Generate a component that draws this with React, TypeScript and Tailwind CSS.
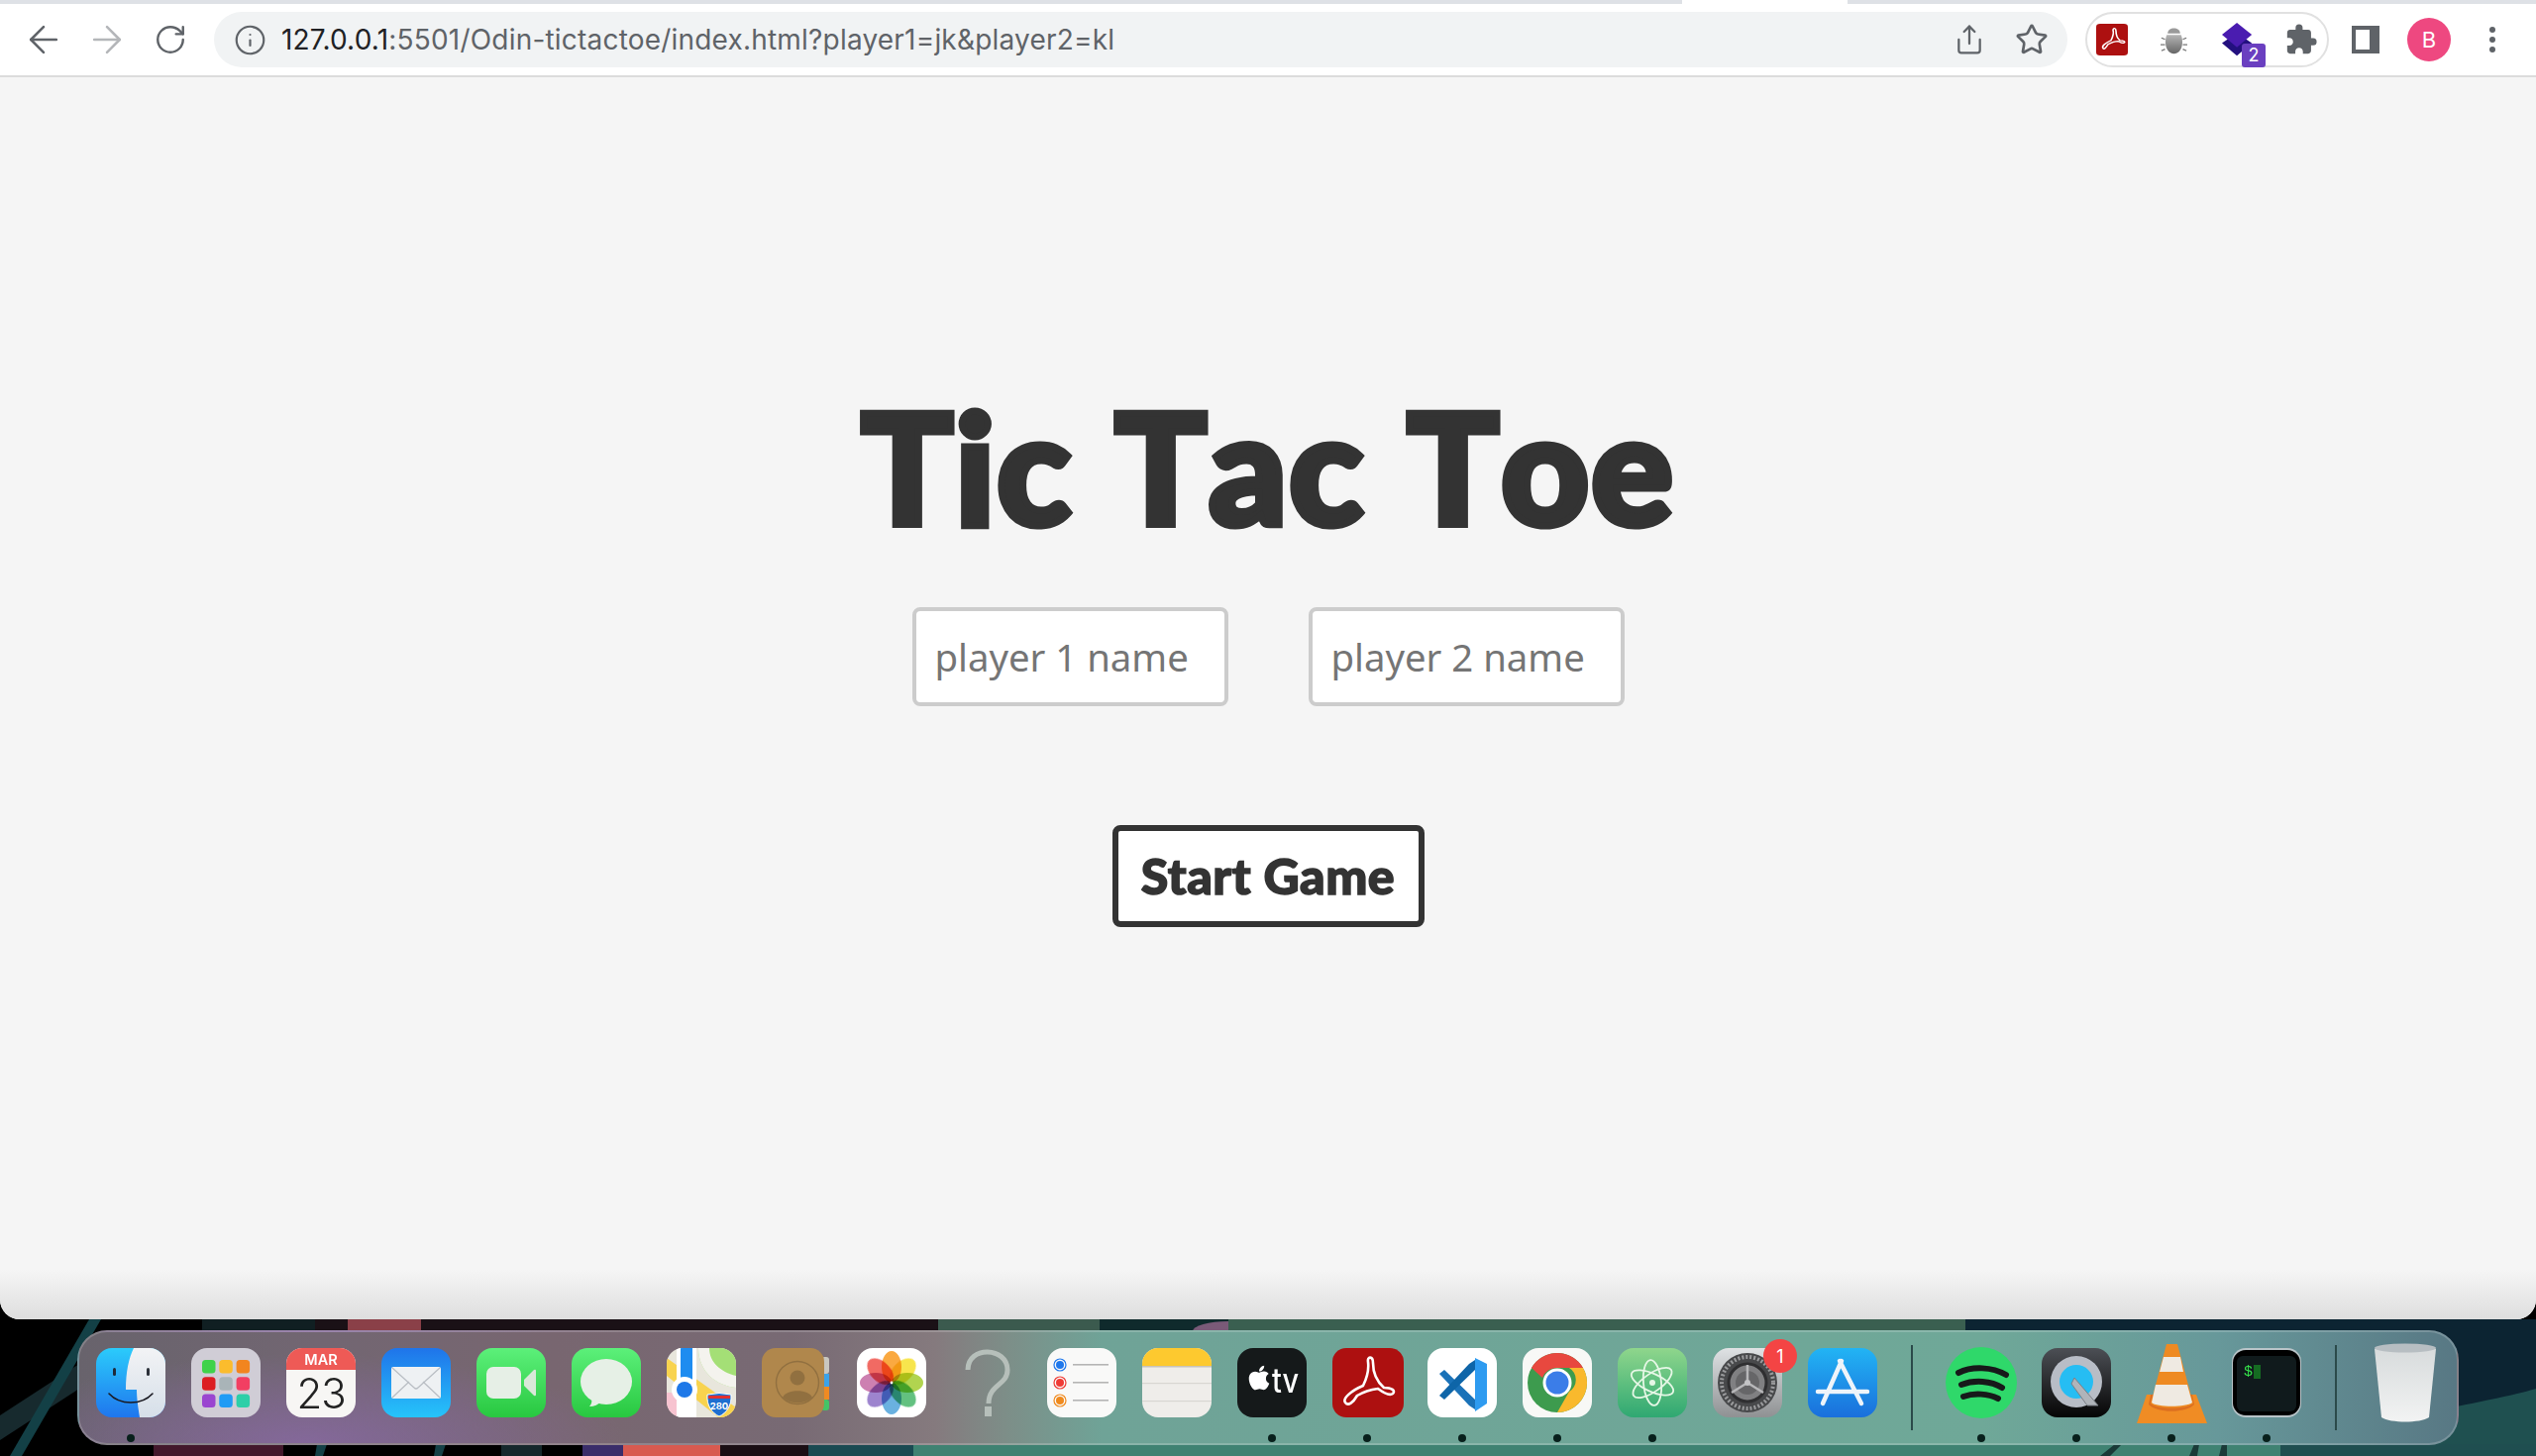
import type { ReactNode } from "react";
import { ArrowLeft, ArrowRight, Info, RotateCw, Share, Star } from "lucide-react";
import { MdExtension } from "react-icons/md";
import { FaApple } from "react-icons/fa";

const titleFont = "font-['Lato',sans-serif] font-black";

function Icon({ children, defs }: { children: ReactNode; defs?: ReactNode }) {
  return (
    <svg viewBox="0 0 70 70" className="h-[70px] w-[70px] overflow-visible">
      {defs && <defs>{defs}</defs>}
      {children}
    </svg>
  );
}

function Finder() {
  return (
    <Icon
      defs={
        <>
          <linearGradient id="fb" x1="0" y1="0" x2="0" y2="1">
            <stop offset="0" stopColor="#2bcbfb" />
            <stop offset="1" stopColor="#1f76ee" />
          </linearGradient>
          <linearGradient id="fw" x1="0" y1="0" x2="0" y2="1">
            <stop offset="0" stopColor="#f2f3f5" />
            <stop offset="1" stopColor="#d6dfe9" />
          </linearGradient>
          <clipPath id="fc">
            <rect width="70" height="70" rx="16" />
          </clipPath>
        </>
      }
    >
      <g clipPath="url(#fc)">
        <rect width="70" height="70" fill="url(#fb)" />
        <path d="M38 0H70V70H44C42 58 41 50 41 42H30C30 24 33 10 38 0Z" fill="url(#fw)" />
      </g>
      <rect x="17" y="20" width="3" height="8" rx="1.5" fill="#1e2a3a" />
      <rect x="51" y="20" width="3" height="8" rx="1.5" fill="#2a2f38" />
      <path d="M13 46C24 58 46 58 57 46" fill="none" stroke="#1a1a22" strokeWidth="1.6" strokeLinecap="round" />
    </Icon>
  );
}

function Launchpad() {
  const tiles = ["#3fd24a", "#fbbc2d", "#f2851f", "#dc1d22", "#a9b4b8", "#f23f62", "#9a45d0", "#1f9bf5", "#2dcfa8"];
  return (
    <Icon>
      <rect width="70" height="70" rx="16" fill="#d0cdd6" />
      {tiles.map((color, i) => (
        <rect key={color} x={11 + (i % 3) * 17.3} y={12 + Math.floor(i / 3) * 17.3} width="13.5" height="13.5" rx="3.5" fill={color} />
      ))}
    </Icon>
  );
}

function Calendar() {
  return (
    <Icon defs={<clipPath id="cc"><rect width="70" height="70" rx="16" /></clipPath>}>
      <g clipPath="url(#cc)">
        <rect width="70" height="70" fill="#f7f6f4" />
        <rect width="70" height="22" fill="#ee5a56" />
      </g>
      <text x="35" y="17" textAnchor="middle" fontFamily="Inter, sans-serif" fontWeight="600" fontSize="14.5" fill="#fff">MAR</text>
      <text x="35" y="61" textAnchor="middle" fontFamily="Inter, sans-serif" fontWeight="300" fontSize="42" letterSpacing="-1" fill="#222">23</text>
    </Icon>
  );
}

function Mail() {
  return (
    <Icon
      defs={
        <linearGradient id="mb" x1="0" y1="0" x2="0" y2="1">
          <stop offset="0" stopColor="#1f74ea" />
          <stop offset="1" stopColor="#26c4fa" />
        </linearGradient>
      }
    >
      <rect width="70" height="70" rx="16" fill="url(#mb)" />
      <rect x="10" y="19" width="50" height="32" rx="2" fill="#eef1f3" />
      <path d="M11 20L33 40Q35 42 37 40L59 20M11 50L28 34M59 50L42 34" fill="none" stroke="#b9bec4" strokeWidth="1.2" />
    </Icon>
  );
}

function FaceTime() {
  return (
    <Icon
      defs={
        <linearGradient id="ftb" x1="0" y1="0" x2="0" y2="1">
          <stop offset="0" stopColor="#5cf07a" />
          <stop offset="1" stopColor="#28c840" />
        </linearGradient>
      }
    >
      <rect width="70" height="70" rx="16" fill="url(#ftb)" />
      <rect x="10" y="19" width="35" height="32" rx="7" fill="#e6efe6" />
      <path d="M48 32L58 22Q60 21 60 23V47Q60 49 58 48L48 38Z" fill="#d8e8d8" />
    </Icon>
  );
}

function Messages() {
  return (
    <Icon
      defs={
        <linearGradient id="msb" x1="0" y1="0" x2="0" y2="1">
          <stop offset="0" stopColor="#5cf07a" />
          <stop offset="1" stopColor="#28c840" />
        </linearGradient>
      }
    >
      <rect width="70" height="70" rx="16" fill="url(#msb)" />
      <ellipse cx="35" cy="34" rx="26" ry="23" fill="#e6f0e6" />
      <path d="M20 50C21 54 20 57 18 59C23 59 27 57 30 54Z" fill="#e6f0e6" />
    </Icon>
  );
}

function Maps() {
  return (
    <Icon defs={<clipPath id="mc"><rect width="70" height="70" rx="16" /></clipPath>}>
      <g clipPath="url(#mc)">
        <rect width="70" height="70" fill="#e8e6dc" />
        <path d="M32 0H70V40C50 38 32 24 32 0Z" fill="#a4df76" />
        <path d="M32 0H43C43 14 54 24 70 28V40C50 38 32 24 32 0Z" fill="#f4f3ee" />
        <path d="M0 10L70 60V70H52L0 28Z" fill="#f8d34e" />
        <rect y="45" width="10" height="25" fill="#f7c3d0" />
        <rect x="10" width="20" height="70" fill="#fff" />
        <rect x="14" width="12" height="32" fill="#1e8cf0" />
        <circle cx="18" cy="42" r="13" fill="#fff" />
        <circle cx="18" cy="42" r="8" fill="#1e78e8" />
        <path d="M41 47Q53 44 65 47C66 58 60 66 53 69C46 66 40 58 41 47Z" fill="#1e6fd0" stroke="#fff" strokeWidth="1" />
        <rect x="42" y="48" width="22" height="3" fill="#e03030" />
        <text x="53" y="62" textAnchor="middle" fontFamily="Inter, sans-serif" fontWeight="700" fontSize="9.5" fill="#fff">280</text>
      </g>
    </Icon>
  );
}

function Contacts() {
  return (
    <Icon>
      <rect x="60" y="9" width="8" height="17" rx="3" fill="#c9c7c0" />
      <rect x="60" y="26" width="8" height="13" fill="#3ba3ea" />
      <rect x="60" y="39" width="8" height="13" fill="#ef8a22" />
      <rect x="60" y="52" width="8" height="11" rx="3" fill="#44c466" />
      <rect x="0" width="63" height="70" rx="14" fill="#b0874c" />
      <circle cx="36" cy="35" r="21.5" fill="none" stroke="#917040" strokeWidth="1.4" />
      <circle cx="36" cy="30" r="7.5" fill="#917040" />
      <path d="M21 50C24 41 48 41 51 50C43 57 29 57 21 50Z" fill="#917040" />
    </Icon>
  );
}

function Photos() {
  const petals = ["#f9a02c", "#f6e23a", "#a9cf3c", "#52ba72", "#5aa9dd", "#9277c9", "#c872a8", "#ef5a52"];
  return (
    <Icon>
      <rect width="70" height="70" rx="16" fill="#fff" />
      {petals.map((color, i) => (
        <ellipse key={color} cx="35" cy="19" rx="10" ry="16" fill={color} fillOpacity="0.9" className="mix-blend-multiply" transform={`rotate(${i * 45} 35 35)`} />
      ))}
      <circle cx="35" cy="35" r="1.4" fill="#fff" />
    </Icon>
  );
}

function Unknown() {
  return (
    <Icon>
      <path d="M16 22C16 -3 56 -1 56 22C56 38 37 36 37 56" fill="none" stroke="#b6bfba" strokeWidth="5" />
      <rect x="33" y="59" width="7" height="10" fill="#b6bfba" />
    </Icon>
  );
}

function Reminders() {
  const dots = ["#1f78ec", "#ef3b35", "#f08a1d"];
  return (
    <Icon>
      <rect width="70" height="70" rx="16" fill="#f9f9f8" />
      {dots.map((color, i) => (
        <g key={color}>
          <circle cx="13" cy={17 + i * 18} r="6" fill="none" stroke={color} strokeWidth="1.2" />
          <circle cx="13" cy={17 + i * 18} r="4" fill={color} />
          <rect x="26" y={16 + i * 18} width="36" height="1.6" fill="#b5b5b5" />
        </g>
      ))}
    </Icon>
  );
}

function Notes() {
  return (
    <Icon defs={<clipPath id="nc"><rect width="70" height="70" rx="16" /></clipPath>}>
      <g clipPath="url(#nc)">
        <rect width="70" height="70" fill="#efedea" />
        <rect width="70" height="18" fill="#fdc92f" />
        <rect y="18" width="70" height="1.5" fill="#c8c4b8" />
        <rect y="35" width="70" height="1.2" fill="#d8d6d2" />
        <rect y="53" width="70" height="1.2" fill="#d8d6d2" />
      </g>
    </Icon>
  );
}

function AppleTv() {
  return (
    <Icon>
      <rect width="70" height="70" rx="16" fill="#15191a" />
      <FaApple x="8" y="16" size="28" color="#fff" />
      <text x="35" y="45" textLength="27" lengthAdjust="spacingAndGlyphs" fontFamily="Inter, sans-serif" fontWeight="500" fontSize="34" fill="#fff">tv</text>
    </Icon>
  );
}

const acrobatPath =
  "M13 55C10 51 19 43 31 38C36 28 37 22 36 14C35 8 41 8 41 15C41 24 44 33 52 40C60 40 64 43 61 46C57 49 50 44 46 41C38 42 30 45 25 48C21 55 16 59 13 55Z";

function Acrobat() {
  return (
    <Icon>
      <rect width="72" height="70" rx="14" fill="#ad1010" />
      <path d={acrobatPath} fill="none" stroke="#fff" strokeWidth="2.6" />
    </Icon>
  );
}

function VsCode() {
  return (
    <Icon>
      <rect width="70" height="70" rx="16" fill="#fff" />
      <path d="M12 26L17 22L48 52L48 62L42 58Z" fill="#1a72b8" />
      <path d="M12 48L17 52L48 22V12L42 16Z" fill="#0e65a8" />
      <path d="M48 10L60 16V56L48 64Z" fill="#2e9bf0" />
    </Icon>
  );
}

function Chrome() {
  return (
    <Icon>
      <rect width="70" height="70" rx="16" fill="#f8f8f6" />
      <circle cx="35" cy="35" r="30" fill="#3d9b4e" />
      <path d="M35 5A30 30 0 0 1 61 20H35A15 15 0 0 0 20 30L9 20A30 30 0 0 1 35 5Z" fill="#e8483f" />
      <path d="M61 20A30 30 0 0 1 35 65L47 44A14 14 0 0 0 47 20Z" fill="#f9b92d" />
      <circle cx="35" cy="35" r="14.5" fill="#fff" />
      <circle cx="35" cy="35" r="11.5" fill="#3b7de8" />
    </Icon>
  );
}

function Atom() {
  return (
    <Icon
      defs={
        <linearGradient id="ab" x1="0" y1="0" x2="0" y2="1">
          <stop offset="0" stopColor="#8fd68c" />
          <stop offset="1" stopColor="#2fa872" />
        </linearGradient>
      }
    >
      <rect width="70" height="70" rx="16" fill="url(#ab)" />
      <g fill="none" stroke="#e6f7e6" strokeWidth="1.8">
        <ellipse cx="35" cy="35" rx="23" ry="9" transform="rotate(25 35 35)" />
        <ellipse cx="35" cy="35" rx="23" ry="9" transform="rotate(-35 35 35)" />
        <ellipse cx="35" cy="35" rx="23" ry="9" transform="rotate(85 35 35)" />
      </g>
      <circle cx="35" cy="35" r="3" fill="#e6f7e6" />
    </Icon>
  );
}

function SystemPrefs() {
  return (
    <Icon
      defs={
        <linearGradient id="sb" x1="0" y1="0" x2="0" y2="1">
          <stop offset="0" stopColor="#dfe2e4" />
          <stop offset="1" stopColor="#8f9193" />
        </linearGradient>
      }
    >
      <rect width="70" height="70" rx="16" fill="url(#sb)" />
      <circle cx="35" cy="35" r="30" fill="#48494b" />
      <circle cx="35" cy="35" r="26" fill="none" stroke="#9a9b9d" strokeWidth="4" strokeDasharray="2 2" />
      <circle cx="35" cy="35" r="19" fill="#808082" stroke="#2f2f31" strokeWidth="3" />
      <circle cx="35" cy="35" r="12" fill="#666668" />
      <path d="M35 35V17M35 35L19 45M35 35L51 45" stroke="#b8b8ba" strokeWidth="2.5" />
      <circle cx="35" cy="35" r="3" fill="#c4c4c6" />
    </Icon>
  );
}

function AppStore() {
  return (
    <Icon
      defs={
        <linearGradient id="asb" x1="0" y1="0" x2="0" y2="1">
          <stop offset="0" stopColor="#22b4f4" />
          <stop offset="1" stopColor="#1a6fdc" />
        </linearGradient>
      }
    >
      <rect width="70" height="70" rx="16" fill="url(#asb)" />
      <path d="M34 13L15 56M32 13L54 56M10 44H60" stroke="#eef4fa" strokeWidth="4.5" strokeLinecap="round" fill="none" />
    </Icon>
  );
}

function Spotify() {
  return (
    <Icon>
      <circle cx="35" cy="35" r="36" fill="#2fd86a" />
      <path d="M12 25C26 18 46 19 60 27M15 37C28 32 45 33 56 40M17 49C28 45 42 46 52 51" fill="none" stroke="#17191a" strokeWidth="6" strokeLinecap="round" />
    </Icon>
  );
}

function QuickTime() {
  return (
    <Icon
      defs={
        <linearGradient id="qb" x1="0" y1="0" x2="0" y2="1">
          <stop offset="0" stopColor="#4c4f55" />
          <stop offset="1" stopColor="#050505" />
        </linearGradient>
      }
    >
      <rect width="70" height="70" rx="16" fill="url(#qb)" />
      <circle cx="35" cy="34" r="26" fill="#b8bdc6" />
      <circle cx="35" cy="34" r="17" fill="#26bdf3" />
      <path d="M33 30L57 58H46L30 36Z" fill="#b0b4ba" stroke="#7b7f85" strokeWidth="1" />
    </Icon>
  );
}

function Vlc() {
  return (
    <Icon>
      <path d="M0 76L10 47H60L71 76Z" fill="#f08c24" />
      <path d="M14 47H56L58 57C50 66 20 66 12 57Z" fill="#dc6f20" />
      <path d="M30 -4H41L57 56C50 62 20 62 14 56Z" fill="#ee8a22" />
      <path d="M27 9H44L47 24H23Z" fill="#efeae2" />
      <path d="M19 37H51L56 55C50 60 20 60 15 55Z" fill="#efeae2" />
    </Icon>
  );
}

function Terminal() {
  return (
    <Icon>
      <rect width="70" height="70" rx="14" fill="#b9c4c8" />
      <rect x="1" y="2" width="68" height="66" rx="13" fill="#000" />
      <rect x="5" y="8" width="60" height="56" rx="6" fill="#101a1c" />
      <text x="12" y="28" fontFamily="'Liberation Mono', monospace" fontSize="15" fill="#35e04a">$</text>
      <rect x="22" y="17" width="7" height="14" fill="#156b22" />
    </Icon>
  );
}

function Trash() {
  return (
    <Icon
      defs={
        <linearGradient id="tb" x1="0" y1="0" x2="0" y2="1">
          <stop offset="0" stopColor="#d6dadb" />
          <stop offset="1" stopColor="#f2f3f3" />
        </linearGradient>
      }
    >
      <path d="M4 1C16 -5 54 -5 66 1L59 70C50 76 20 76 11 70Z" fill="url(#tb)" />
      <ellipse cx="35" cy="0" rx="31" ry="4.5" fill="#b7bec2" />
    </Icon>
  );
}

type DockEntry = { id: string; node: ReactNode; running?: boolean; badge?: string };

const dockApps: DockEntry[] = [
  { id: "finder", node: <Finder />, running: true },
  { id: "launchpad", node: <Launchpad /> },
  { id: "calendar", node: <Calendar /> },
  { id: "mail", node: <Mail /> },
  { id: "facetime", node: <FaceTime /> },
  { id: "messages", node: <Messages /> },
  { id: "maps", node: <Maps /> },
  { id: "contacts", node: <Contacts /> },
  { id: "photos", node: <Photos /> },
  { id: "unknown", node: <Unknown /> },
  { id: "reminders", node: <Reminders /> },
  { id: "notes", node: <Notes /> },
  { id: "tv", node: <AppleTv />, running: true },
  { id: "acrobat", node: <Acrobat />, running: true },
  { id: "vscode", node: <VsCode />, running: true },
  { id: "chrome", node: <Chrome />, running: true },
  { id: "atom", node: <Atom />, running: true },
  { id: "prefs", node: <SystemPrefs />, badge: "1" },
  { id: "appstore", node: <AppStore /> },
];

const dockRecent: DockEntry[] = [
  { id: "spotify", node: <Spotify />, running: true },
  { id: "quicktime", node: <QuickTime />, running: true },
  { id: "vlc", node: <Vlc />, running: true },
  { id: "terminal", node: <Terminal />, running: true },
];

function DockItem({ node, running, badge }: Omit<DockEntry, "id">) {
  return (
    <div className="relative flex w-[70px] flex-col items-center">
      {node}
      {badge && (
        <span className="absolute -right-[15px] -top-[9px] flex h-[34px] w-[34px] items-center justify-center rounded-full bg-[#f44444] font-['Inter',sans-serif] text-[18px] text-white">
          {badge}
        </span>
      )}
      <span className={`mt-[17px] h-[8px] w-[8px] rounded-full ${running ? "bg-[#08201c]" : "bg-transparent"}`} />
    </div>
  );
}

function DockSeparator() {
  return (
    <div className="-mt-[3px] flex h-[86px] w-[18px] justify-center self-start">
      <div className="h-full w-[2px] bg-[#2b4a4a]" />
    </div>
  );
}

function Dock() {
  return (
    <div className="relative z-10 ml-[78px] mt-[11px] flex h-[116px] w-[2404px] gap-[26px] rounded-[30px] border-[2px] border-[#ffffff30] bg-[radial-gradient(ellipse_320px_90px_at_230px_100%,#84689a,transparent),linear-gradient(90deg,#68636c_0%,#726672_10%,#786670_20%,#786a74_30%,#857a7e_36%,#7d8e88_39%,#6fa397_43%,#6fa898_80%,#67989a_90%,#587884_100%)] pl-[17px] pt-[16px]">
      {dockApps.map((app) => (
        <DockItem key={app.id} node={app.node} running={app.running} badge={app.badge} />
      ))}
      <DockSeparator />
      {dockRecent.map((app) => (
        <DockItem key={app.id} node={app.node} running={app.running} />
      ))}
      <DockSeparator />
      <DockItem node={<Trash />} />
    </div>
  );
}

function Wallpaper() {
  return (
    <svg viewBox="0 0 2560 138" className="absolute bottom-0 left-0 h-[138px] w-[2560px]">
      <rect width="2560" height="138" fill="#000" />
      {/* upper edge, between the window and the dock */}
      <rect x="204" width="114" height="20" fill="#101f22" />
      <rect x="318" width="630" height="20" fill="#1a1116" />
      <rect x="351" width="74" height="14" fill="#8a4048" />
      <rect x="947" width="163" height="14" fill="#3b5a4e" />
      <rect x="1110" width="130" height="14" fill="#0f2a2c" />
      <ellipse cx="1240" cy="12" rx="36" ry="10" fill="#7a5a78" />
      <rect x="1240" width="744" height="14" fill="#3a5f50" />
      <path d="M1984 0H2560V92C2520 84 2500 86 2440 100L1984 120Z" fill="#0c2432" />
      <path d="M2480 88C2510 82 2540 76 2560 70V138H2300L2440 100Z" fill="#1f5050" />
      {/* lower edge, under the dock */}
      <rect x="155" y="126" width="131" height="12" fill="#43182c" />
      <rect x="506" y="126" width="41" height="12" fill="#16282c" />
      <rect x="588" y="126" width="41" height="12" fill="#3a2d6a" />
      <rect x="629" y="126" width="98" height="12" fill="#d85a50" />
      <rect x="727" y="126" width="89" height="12" fill="#1a0e14" />
      <rect x="816" y="126" width="106" height="12" fill="#1a4a52" />
      <rect x="922" y="126" width="1380" height="12" fill="#3f8272" />
      <rect x="2302" y="126" width="258" height="12" fill="#1f4e50" />
      <path d="M2120 138L2135 126H2142L2130 138ZM2210 138L2215 126H2220L2218 138ZM2240 138L2243 126H2248V138Z" fill="#1a3a38" />
      <path d="M320 126H330L326 138H318ZM440 126H450L446 138H438Z" fill="#134046" />
      {/* left edge, beside the dock */}
      <path d="M0 97L80 45V70L0 122Z" fill="#172a2e" />
      <path d="M90 0H102L22 138H10Z" fill="#134046" />
    </svg>
  );
}

function ToolbarIcons() {
  return (
    <div className="flex items-center">
      <div className="ml-[12px] flex w-[192px] items-center text-[#5f6368]">
        <div className="flex w-[64px] justify-center">
          <ArrowLeft size={44} strokeWidth={1.4} />
        </div>
        <div className="flex w-[64px] justify-center">
          <ArrowRight size={44} strokeWidth={1.4} className="text-[#b4b6b9]" />
        </div>
        <div className="flex w-[64px] justify-center">
          <RotateCw size={34} strokeWidth={1.7} />
        </div>
      </div>
      <div className="ml-[12px] flex h-[56px] w-[1871px] items-center rounded-full bg-[#f1f3f4] pl-[20px] pr-[19px]">
        <Info size={33} strokeWidth={1.6} className="text-[#5f6368]" />
        <span className="ml-[15px] font-['Inter',sans-serif] text-[28px] leading-none tracking-[0.2px] text-[#5f6368]">
          <span className="text-[#202124]">127.0.0.1</span>:5501/Odin-tictactoe/index.html?player1=jk&amp;player2=kl
        </span>
        <Share size={32} strokeWidth={1.7} className="ml-auto mr-[30px] text-[#5f6368]" />
        <Star size={34} strokeWidth={1.9} className="text-[#5f6368]" />
      </div>
      <div className="ml-[18px] flex h-[56px] w-[246px] items-center rounded-full border-[2px] border-[#e1e1e1] pl-[9px]">
        <svg viewBox="0 0 32 40" className="h-[32px] w-[32px]" preserveAspectRatio="none">
          <rect width="32" height="40" rx="4" fill="#ad1010" />
          <path d="M7 31C5 28 10 24 15 21C17 16 18 12 17 8C17 5 20 5 20 9C20 14 21 18 24 21C28 21 30 23 28 24C26 25 24 23 22 22C18 22 15 24 12 26C10 30 8 33 7 31Z" fill="none" stroke="#fff" strokeWidth="1.6" />
        </svg>
        <svg viewBox="0 0 30 38" className="ml-[33px] h-[29px] w-[27px]" preserveAspectRatio="none">
          <defs>
            <linearGradient id="bug" x1="0" y1="0" x2="0" y2="1">
              <stop offset="0" stopColor="#b5b5b5" />
              <stop offset="1" stopColor="#666" />
            </linearGradient>
          </defs>
          <path d="M8 10C8 1 22 1 22 10Z" fill="#9a9a9a" />
          <path d="M7 12H23C26 20 25 36 15 37C5 36 4 20 7 12Z" fill="url(#bug)" />
          <path d="M1 16L5 18M29 16L25 18M0 25L5 25M30 25L25 25M1 33L5 31M29 33L25 31" stroke="#777" strokeWidth="1.6" />
        </svg>
        <div className="relative ml-[35px] h-[34px] w-[32px]">
          <svg viewBox="0 0 34 40" className="h-[34px] w-[32px]" preserveAspectRatio="none">
            <path d="M0 24L16 12L32 24L16 39Z" fill="#23107f" />
            <path d="M0 14L16 0L32 14L16 29Z" fill="#4a1cb0" />
          </svg>
          <span className="absolute -right-[12px] top-[21px] flex h-[24px] w-[24px] items-center justify-center rounded-[3px] bg-[#6a3fc0] font-['Inter',sans-serif] text-[18px] leading-none text-white">
            2
          </span>
        </div>
        <MdExtension size={34} className="ml-[31px] text-[#5f6368]" />
      </div>
      <svg viewBox="0 0 28 28" className="ml-[23px] h-[28px] w-[28px]">
        <path d="M0 0H28V28H0ZM4 4V24H18V4Z" fill="#5f6368" fillRule="evenodd" />
      </svg>
      <span className="ml-[28px] flex h-[44px] w-[44px] items-center justify-center rounded-full bg-[#ee4880] font-['Inter',sans-serif] text-[22px] text-white">
        B
      </span>
      <svg viewBox="0 0 6 26" className="ml-[39px] h-[26px] w-[6px]">
        <circle cx="3" cy="3" r="3" fill="#5f6368" />
        <circle cx="3" cy="13" r="3" fill="#5f6368" />
        <circle cx="3" cy="23" r="3" fill="#5f6368" />
      </svg>
    </div>
  );
}

function NameInput({ placeholder }: { placeholder: string }) {
  return (
    <input
      type="text"
      placeholder={placeholder}
      className="h-[100px] w-[319px] rounded-[8px] border-[4px] border-[#cccccc] bg-white pl-[19px] font-['Noto_Sans',sans-serif] text-[38.3px] text-[#333] placeholder:text-[#757575]"
    />
  );
}

export default function App() {
  return (
    <div className="relative h-[1470px] w-[2560px] overflow-hidden bg-black">
      <Wallpaper />
      <div className="relative z-10 flex h-[1332px] flex-col overflow-hidden rounded-b-[20px] bg-white">
        <div className="flex h-[4px]">
          <div className="w-[1698px] bg-[#dee1e6]" />
          <div className="w-[167px]" />
          <div className="flex-1 bg-[#dee1e6]" />
        </div>
        <div className="flex h-[72px] items-center">
          <ToolbarIcons />
        </div>
        <div className="h-[2px] bg-[#dcdcdc]" />
        <main className="flex flex-1 flex-col items-center bg-[linear-gradient(180deg,#f5f5f5_calc(100%-50px),#dedede_100%)] pt-[316px]">
          <h1 className={`${titleFont} text-[154px] leading-none tracking-[2px] text-[#333] [font-kerning:none] [word-spacing:4px] [-webkit-text-stroke:7px_#333]`}>
            Tic Tac Toe
          </h1>
          <div className="mt-[65px] flex gap-[81px]">
            <NameInput placeholder="player 1 name" />
            <NameInput placeholder="player 2 name" />
          </div>
          <button className={`${titleFont} mt-[120px] h-[103px] w-[315px] rounded-[8px] border-[6px] border-[#333] bg-white text-[50px] tracking-[0.5px] text-[#333] [-webkit-text-stroke:1.5px_#333]`}>
            Start Game
          </button>
        </main>
      </div>
      <Dock />
    </div>
  );
}
